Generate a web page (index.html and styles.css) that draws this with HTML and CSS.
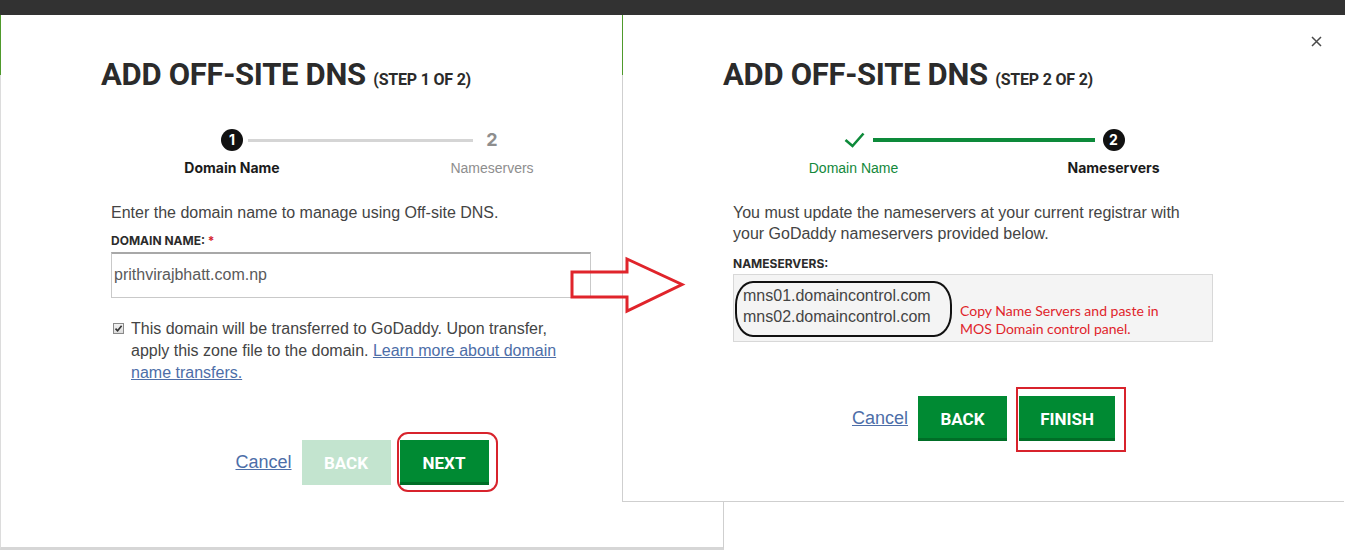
FILE: index.html
```html
<!DOCTYPE html>
<html lang="en">
<head>
<meta charset="utf-8">
<title>Add Off-site DNS</title>
<link rel="stylesheet" href="styles.css">
</head>
<body>
  <section class="modal modal-left">
    <div class="topbar"></div>
    <h1 class="title">ADD OFF-SITE DNS <small>(STEP 1 OF 2)</small></h1>
    <div class="stepper">
      <div class="track">
        <span class="dot">1</span>
        <span class="line"></span>
        <span class="num">2</span>
      </div>
      <div class="labels">
        <span class="lbl lbl-current">Domain Name</span>
        <span class="lbl lbl-muted">Nameservers</span>
      </div>
    </div>
    <div class="content">
      <p class="intro">Enter the domain name to manage using Off-site DNS.</p>
      <label class="field-label">DOMAIN NAME: <span class="req">*</span></label>
      <div class="input">prithvirajbhatt.com.np</div>
      <div class="check-row">
        <span class="checkbox"><svg width="9" height="9" viewBox="0 0 9 9"><path d="M1.5 4.6 L3.6 6.8 L7.6 1.8" fill="none" stroke="#333" stroke-width="1.6"/></svg></span>
        <p>This domain will be transferred to GoDaddy. Upon transfer, apply this zone file to the domain. <a href="#">Learn more about domain name transfers.</a></p>
      </div>
    </div>
    <div class="actions">
      <a class="cancel" href="#">Cancel</a>
      <button class="btn btn-disabled">BACK</button>
      <span class="mark-round"><button class="btn">NEXT</button></span>
    </div>
  </section>

  <section class="modal modal-right">
    <div class="topbar"></div>
    <span class="close"><svg width="11" height="11" viewBox="0 0 11 11"><path d="M1 1 L10 10 M10 1 L1 10" stroke="#4a4a4a" stroke-width="1.5"/></svg></span>
    <h1 class="title">ADD OFF-SITE DNS <small>(STEP 2 OF 2)</small></h1>
    <div class="stepper">
      <div class="track">
        <span class="check"><svg width="22" height="22" viewBox="0 0 22 22"><path d="M2.5 11 L9.5 17 L20.5 4.5" fill="none" stroke="#0d8a3a" stroke-width="2.6"/></svg></span>
        <span class="line line-done"></span>
        <span class="dot">2</span>
      </div>
      <div class="labels">
        <span class="lbl lbl-done">Domain Name</span>
        <span class="lbl lbl-current">Nameservers</span>
      </div>
    </div>
    <div class="content">
      <p class="intro">You must update the nameservers at your current registrar with your GoDaddy nameservers provided below.</p>
      <label class="field-label field-label-ns">NAMESERVERS:</label>
      <div class="ns-box">
        <div class="ns-list">
          <div>mns01.domaincontrol.com</div>
          <div>mns02.domaincontrol.com</div>
        </div>
        <p class="note">Copy Name Servers and paste in<br>MOS Domain control panel.</p>
      </div>
    </div>
    <div class="actions actions-ns">
      <a class="cancel" href="#">Cancel</a>
      <button class="btn">BACK</button>
      <span class="mark-square"><button class="btn btn-wide">FINISH</button></span>
    </div>
  </section>

  <svg class="arrow" width="122" height="60" viewBox="0 0 122 60">
    <polygon points="7,17 62,17 62,4 117,29.5 62,56 62,42 7,42" fill="none" stroke="#e0242b" stroke-width="3" stroke-linejoin="miter"/>
  </svg>
</body>
</html>
```

FILE: styles.css
```css
* { box-sizing: border-box; }

body {
  margin: 0;
  width: 1360px;
  height: 550px;
  overflow: hidden;
  position: relative;
  background: #fff;
  font-family: "Liberation Sans", Arial, sans-serif;
  color: #444;
}

.modal {
  position: absolute;
  top: 0;
  background: #fff;
}

.modal::before {
  content: "";
  position: absolute;
  left: -1px;
  top: 15px;
  width: 1px;
  height: 60px;
  background: #4f9a2c;
}

.modal-left {
  left: 0;
  width: 724px;
  height: 550px;
  border-left: 1px solid #dcdcdc;
  border-right: 1px solid #cfcfcf;
  border-bottom: 3px solid #d6d6d6;
}

.modal-right {
  left: 622px;
  width: 722px;
  height: 502px;
  border-left: 1px solid #cfcfcf;
  border-bottom: 1px solid #cfcfcf;
}

.topbar {
  height: 15px;
  margin: 0 -1px;
  background: #323232;
}

.close {
  position: absolute;
  top: 36px;
  right: 22px;
  display: block;
  line-height: 0;
}

.title {
  margin: 40px 0 0 100px;
  font-family: Roboto, "Liberation Sans", sans-serif;
  font-weight: 700;
  font-size: 31px;
  line-height: 40px;
  letter-spacing: -0.3px;
  color: #2b2b2b;
}

.title small {
  font-size: 16px;
  letter-spacing: -0.2px;
}

/* stepper */
.stepper {
  margin-top: 29px;
}

.track {
  display: flex;
  align-items: center;
  width: 282px;
  margin: 0 auto;
}

.dot {
  width: 22px;
  height: 22px;
  border-radius: 50%;
  background: #111;
  color: #fff;
  font: 700 14px/22px Inter, sans-serif;
  text-align: center;
}

.num {
  width: 22px;
  text-align: center;
  font: 700 18px/22px Inter, sans-serif;
  color: #8e8e8e;
}

.check {
  width: 22px;
  height: 22px;
  line-height: 0;
}

.line {
  flex: 1;
  height: 3px;
  margin: 0 8px 0 5px;
  background: #d5d5d5;
}

.line-done {
  height: 4px;
  margin: 0 8px 0 8px;
  background: #0d8a3a;
}

.labels {
  display: flex;
  justify-content: center;
  gap: 100px;
  margin-top: 8px;
}

.lbl {
  width: 160px;
  text-align: center;
  font-size: 14px;
  line-height: 18px;
}

.lbl-current {
  font-family: Inter, sans-serif;
  font-weight: 700;
  color: #1b1b1b;
}

.lbl-muted {
  color: #8e8e8e;
}

.lbl-done {
  color: #13883b;
}

/* content */
.content {
  padding-left: 110px;
  width: 590px;
}

.intro {
  margin: 25px 0 0;
  font-size: 16px;
  line-height: 21px;
  color: #444;
}

.field-label {
  display: block;
  margin-top: 10px;
  font: 700 12px/16px Inter, sans-serif;
  color: #2b2b2b;
}

.field-label-ns {
  margin-top: 12px;
}

.req {
  color: #d4202c;
}

.input {
  margin-top: 3px;
  height: 46px;
  border: 1px solid #c9c9c9;
  border-top: 2px solid #a8a8a8;
  padding-left: 2px;
  font-size: 16px;
  line-height: 42px;
  color: #5a5a5a;
}

.check-row {
  display: flex;
  align-items: flex-start;
  margin-top: 20px;
}

.checkbox {
  flex: none;
  width: 11px;
  height: 11px;
  margin: 5px 7px 0 2px;
  border: 1px solid #8a8a8a;
  background: linear-gradient(#f2f2f2, #dcdcdc);
  display: flex;
  align-items: center;
  justify-content: center;
}

.check-row p {
  margin: 0;
  max-width: 430px;
  font-size: 16px;
  line-height: 22px;
  color: #444;
}

a {
  color: #4d6ea8;
  text-decoration: underline;
}

/* nameservers */
.ns-box {
  position: relative;
  margin-top: 2px;
  height: 68px;
  border: 1px solid #d8d8d8;
  background: #f4f4f4;
  padding: 10px 0 0 9px;
}

.ns-list {
  position: relative;
  display: inline-block;
  font-size: 16px;
  line-height: 21px;
  color: #444;
}

.ns-list::before {
  content: "";
  position: absolute;
  left: -8px;
  right: -21px;
  top: -4px;
  bottom: -10px;
  border: 2px solid #111;
  border-radius: 18px / 24px;
}

.note {
  position: absolute;
  left: 226px;
  top: 27px;
  margin: 0;
  font-family: Lato, "Open Sans", sans-serif;
  font-size: 14px;
  line-height: 18px;
  color: #e0242b;
}

/* actions */
.actions {
  display: flex;
  justify-content: center;
  align-items: center;
  margin-top: 56px;
}

.actions-ns {
  margin-top: 54px;
}

.cancel {
  font-size: 18px;
  margin-right: 10px;
}

.btn {
  width: 89px;
  height: 45px;
  border: 0;
  border-bottom: 3px solid #006e27;
  padding: 3px 0 0;
  background: #008a33;
  color: #fff;
  font: 700 17px Roboto, "Liberation Sans", sans-serif;
  cursor: pointer;
}

.btn-disabled {
  background: #c3e4cf;
  border-bottom-color: #c3e4cf;
  margin-right: 9px;
}

.actions-ns .btn:not(.btn-wide) {
  margin-right: 12px;
}

.btn-wide {
  width: 96px;
}

.mark-round,
.mark-square {
  position: relative;
  display: block;
  line-height: 0;
}

.mark-round::after {
  content: "";
  position: absolute;
  left: -3px;
  right: -9px;
  top: -8px;
  bottom: -7px;
  border: 2px solid #d8232c;
  border-radius: 11px;
}

.mark-square::after {
  content: "";
  position: absolute;
  left: -3px;
  right: -11px;
  top: -9px;
  bottom: -11px;
  border: 2px solid #d8232c;
}

.arrow {
  position: absolute;
  left: 565px;
  top: 255px;
}
```
